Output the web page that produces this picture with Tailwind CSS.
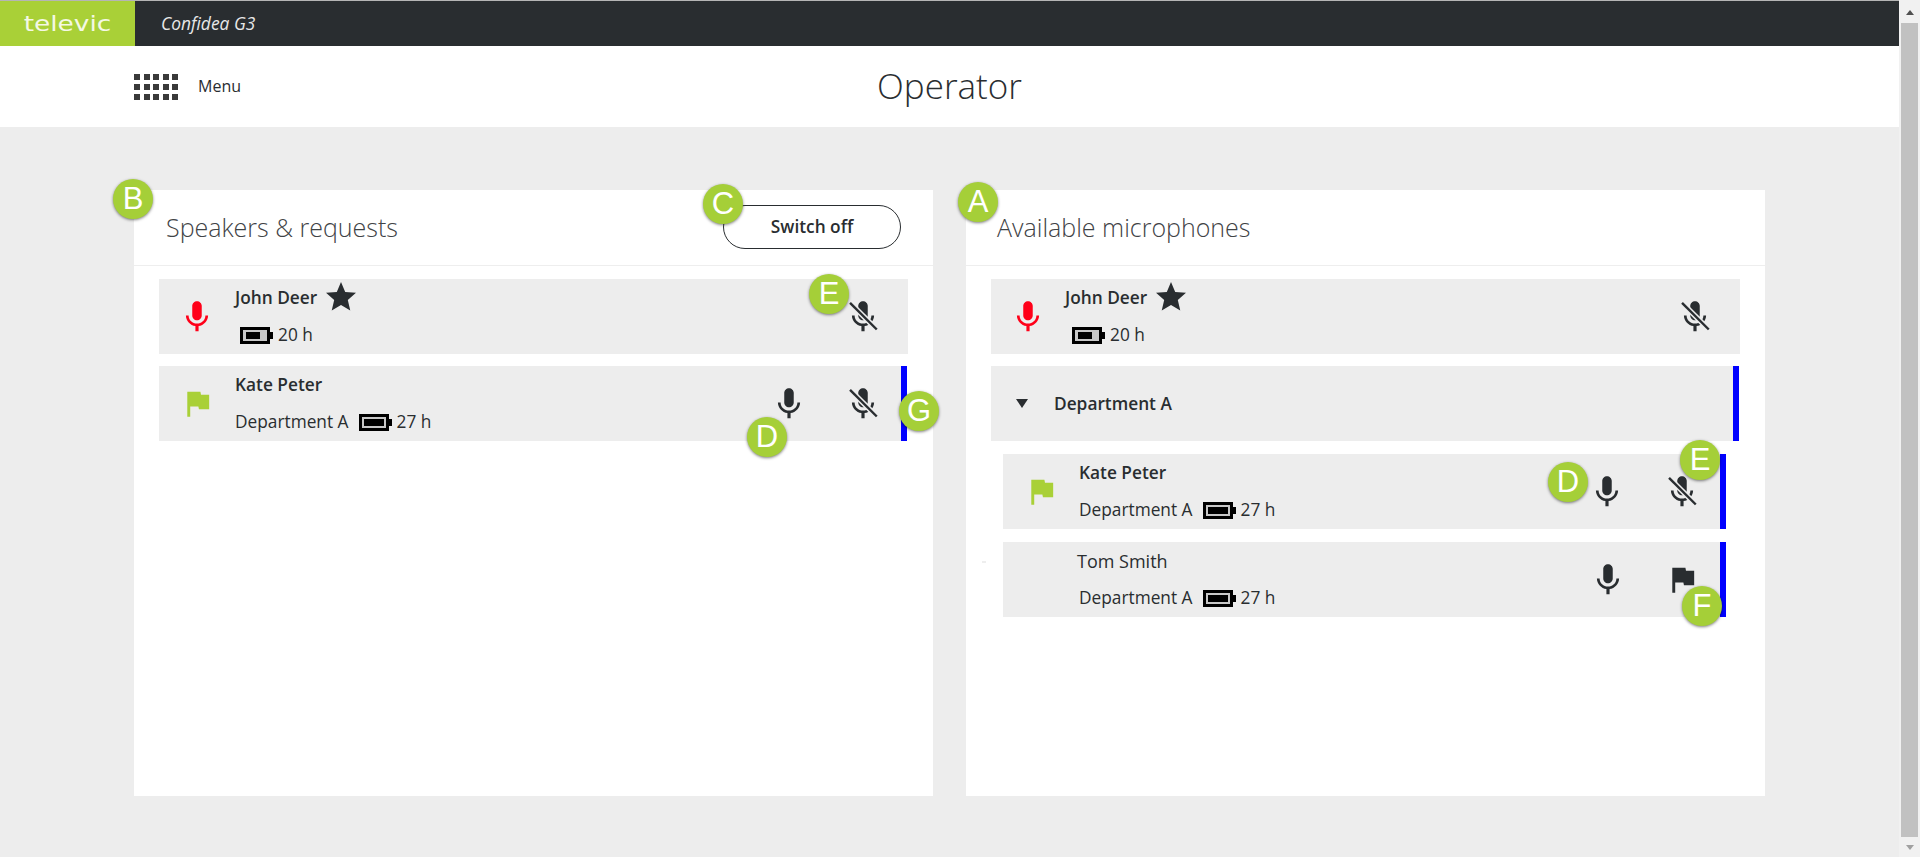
<!DOCTYPE html>
<html lang="en">
<head>
  <meta charset="UTF-8">
  <title>Confidea G3 - Operator</title>
  <meta name="viewport" content="width=device-width, initial-scale=1.0">
  <script src="https://cdn.jsdelivr.net/npm/@tailwindcss/browser@4"></script>
</head>
<body class="font-['Open_Sans',sans-serif] text-[#292d30] bg-[#ededed]">
  <svg class="hidden">
    <symbol id="mic" viewBox="0 0 24 24"><path fill="currentColor" d="M12 14c1.66 0 2.99-1.34 2.99-3L15 5c0-1.66-1.34-3-3-3S9 3.34 9 5v6c0 1.66 1.34 3 3 3zm5.3-3c0 3-2.54 5.1-5.3 5.1S6.7 14 6.7 11H5c0 3.41 2.72 6.23 6 6.72V21h2v-3.28c3.28-.48 6-3.3 6-6.72h-1.7z"/></symbol>
    <symbol id="mic-off" viewBox="0 0 24 24">
      <path fill="currentColor" d="M12 14c1.66 0 2.99-1.34 2.99-3L15 5c0-1.66-1.34-3-3-3S9 3.34 9 5v6c0 1.66 1.34 3 3 3zm5.3-3c0 3-2.54 5.1-5.3 5.1S6.7 14 6.7 11H5c0 3.41 2.72 6.23 6 6.72V21h2v-3.28c3.28-.48 6-3.3 6-6.72h-1.7z"/>
      <path stroke="#ededed" stroke-width="3.4" d="M3.8 3.1 20.7 19.9"/>
      <path stroke="currentColor" stroke-width="1.5" d="M3.8 3.1 20.7 19.9"/>
    </symbol>
    <symbol id="flag" viewBox="0 0 24 24"><path fill="currentColor" d="M14.4 6L14 4H5v17h2v-7h5.6l.4 2h7V6z"/></symbol>
    <symbol id="star" viewBox="0 0 24 24"><path fill="currentColor" d="M12 17.27L18.18 21l-1.64-7.03L22 9.24l-7.19-.61L12 2 9.19 8.63 2 9.24l5.46 4.73L5.82 21z"/></symbol>
    <symbol id="battery-low" viewBox="0 0 33 17">
      <path fill="#000" d="M0 0h30v5h3v7h-3v5H0z"/><path fill="#c8c8c8" d="M3 3h24v11H3z"/><path fill="#000" d="M6 5h14v7H6z"/>
    </symbol>
    <symbol id="battery-full" viewBox="0 0 33 17">
      <path fill="#000" d="M0 0h30v5h3v7h-3v5H0z"/><path fill="#c8c8c8" d="M3 3h24v11H3z"/><path fill="#000" d="M5 5h20v7H5z"/>
    </symbol>
  </svg>

  <div class="relative h-[857px] w-[1920px] overflow-hidden flex">
    <div class="w-[1899px] h-full flex flex-col">
      <!-- top bar -->
      <div class="h-px bg-[#b5b5b5]"></div>
      <div class="h-[45px] bg-[#292d30] flex items-center">
        <div class="w-[135px] h-full bg-[#a9d037] flex items-center justify-center">
          <span class="text-[#f4f8e4] font-['DejaVu_Sans',sans-serif] text-[22px] scale-x-120 leading-none">televic</span>
        </div>
        <div class="ml-[26px] italic text-[17.4px] text-[#e8e8e8]">Confidea G3</div>
      </div>
      <!-- header -->
      <div class="relative h-[81px] bg-white flex items-center justify-center">
        <div class="absolute left-[134px] top-[28px] flex items-center gap-[20px]">
          <div class="w-[44px] grid grid-cols-5 gap-x-[3.5px] gap-y-[4px]">
            <i class="h-[6px] bg-[#3a3a3a]"></i><i class="h-[6px] bg-[#3a3a3a]"></i><i class="h-[6px] bg-[#3a3a3a]"></i><i class="h-[6px] bg-[#3a3a3a]"></i><i class="h-[6px] bg-[#3a3a3a]"></i>
            <i class="h-[6px] bg-[#3a3a3a]"></i><i class="h-[6px] bg-[#3a3a3a]"></i><i class="h-[6px] bg-[#3a3a3a]"></i><i class="h-[6px] bg-[#3a3a3a]"></i><i class="h-[6px] bg-[#3a3a3a]"></i>
            <i class="h-[6px] bg-[#3a3a3a]"></i><i class="h-[6px] bg-[#3a3a3a]"></i><i class="h-[6px] bg-[#3a3a3a]"></i><i class="h-[6px] bg-[#3a3a3a]"></i><i class="h-[6px] bg-[#3a3a3a]"></i>
          </div>
          <span class="text-[16px] mt-[-2px]">Menu</span>
        </div>
        <h1 class="text-[35px] font-light">Operator</h1>
      </div>

      <!-- panels -->
      <div class="flex-1 pl-[134px] pt-[63px] flex gap-[33px]">
        <section class="w-[799px] h-[606px] bg-white">
          <div class="h-[76px] border-b border-[#eeeeee] pl-[32px] pr-[32px] flex items-center justify-between">
            <h2 class="text-[25px] font-light text-[#3f4346]">Speakers &amp; requests</h2>
            <button class="w-[178px] h-[44px] mt-[-1px] rounded-[22px] border border-[#292d30] text-[17.3px] font-semibold">Switch off</button>
          </div>
          <div class="pl-[25px] pt-[13px]">
            <div class="w-[749px] h-[75px] bg-[#ededed] flex items-center">
              <div class="w-[76px] flex justify-center text-[#ff0019]"><svg class="w-[38px] h-[38px]"><use href="#mic"/></svg></div>
              <div class="flex-1 self-stretch text-[17.3px]">
                <div class="flex items-center h-[38px] font-semibold">John Deer<svg class="w-[36px] h-[36px] ml-[6px] mt-[-2px]"><use href="#star"/></svg></div>
                <div class="flex items-center h-[36px] ml-[5px]"><svg class="w-[33px] h-[17px] mr-[5px]"><use href="#battery-low"/></svg>20 h</div>
              </div>
              <div class="pr-[26px] flex"><svg class="w-[38px] h-[38px]"><use href="#mic-off"/></svg></div>
            </div>
            <div class="mt-[12px] w-[748px] h-[75px] bg-[#ededed] border-r-[6px] border-[#0000ff] flex items-center">
              <div class="w-[76px] flex justify-center text-[#a9d037]"><svg class="w-[35px] h-[35px]"><use href="#flag"/></svg></div>
              <div class="flex-1 self-stretch text-[17.3px]">
                <div class="flex items-center h-[37px] font-semibold">Kate Peter</div>
                <div class="flex items-center h-[38px]">Department A<svg class="w-[33px] h-[17px] ml-[10px] mr-[5px]"><use href="#battery-full"/></svg>27 h</div>
              </div>
              <div class="pr-[19px] flex gap-[36px]"><svg class="w-[38px] h-[38px]"><use href="#mic"/></svg><svg class="w-[38px] h-[38px]"><use href="#mic-off"/></svg></div>
            </div>
          </div>
        </section>

        <section class="w-[799px] h-[606px] bg-white">
          <div class="h-[76px] border-b border-[#eeeeee] pl-[31px] flex items-center">
            <h2 class="text-[25px] font-light text-[#3f4346]">Available microphones</h2>
          </div>
          <div class="pl-[25px] pt-[13px]">
            <div class="w-[749px] h-[75px] bg-[#ededed] flex items-center">
              <div class="w-[74px] flex justify-center text-[#ff0019]"><svg class="w-[38px] h-[38px]"><use href="#mic"/></svg></div>
              <div class="flex-1 self-stretch text-[17.3px]">
                <div class="flex items-center h-[38px] font-semibold">John Deer<svg class="w-[36px] h-[36px] ml-[6px] mt-[-2px]"><use href="#star"/></svg></div>
                <div class="flex items-center h-[36px] ml-[7px]"><svg class="w-[33px] h-[17px] mr-[5px]"><use href="#battery-low"/></svg>20 h</div>
              </div>
              <div class="pr-[26px] flex"><svg class="w-[38px] h-[38px]"><use href="#mic-off"/></svg></div>
            </div>
            <div class="mt-[12px] w-[748px] h-[75px] bg-[#ededed] border-r-[6px] border-[#0000ff] flex items-center">
              <div class="ml-[25px] w-0 h-0 border-x-[6.5px] border-x-transparent border-t-[9px] border-t-[#292d30]"></div>
              <div class="ml-[26px] text-[17.3px] font-semibold">Department A</div>
            </div>
            <div class="mt-[13px] ml-[12px] w-[723px] h-[75px] bg-[#ededed] border-r-[6px] border-[#0000ff] flex items-center">
              <div class="w-[76px] flex justify-center text-[#a9d037]"><svg class="w-[35px] h-[35px]"><use href="#flag"/></svg></div>
              <div class="flex-1 self-stretch text-[17.3px]">
                <div class="flex items-center h-[37px] font-semibold">Kate Peter</div>
                <div class="flex items-center h-[38px]">Department A<svg class="w-[33px] h-[17px] ml-[10px] mr-[5px]"><use href="#battery-full"/></svg>27 h</div>
              </div>
              <div class="pr-[19px] flex gap-[37px]"><svg class="w-[38px] h-[38px]"><use href="#mic"/></svg><svg class="w-[38px] h-[38px]"><use href="#mic-off"/></svg></div>
            </div>
            <div class="mt-[13px] ml-[12px] w-[723px] h-[75px] bg-[#ededed] border-r-[6px] border-[#0000ff] flex items-center">
              <div class="w-[76px]"></div>
              <div class="flex-1 self-stretch text-[17.3px]">
                <div class="flex items-center h-[38px] ml-[-2px] text-[18px]">Tom Smith</div>
                <div class="flex items-center h-[36px]">Department A<svg class="w-[33px] h-[17px] ml-[10px] mr-[5px]"><use href="#battery-full"/></svg>27 h</div>
              </div>
              <div class="pr-[20px] flex items-center gap-[38px]"><svg class="w-[38px] h-[38px]"><use href="#mic"/></svg><svg class="w-[35px] h-[35px]"><use href="#flag"/></svg></div>
            </div>
          </div>
        </section>
      </div>
    </div>

    <!-- scrollbar -->
    <div class="w-[21px] h-full bg-[#f1f1f1] flex flex-col items-center">
      <div class="h-[23px] w-full flex items-center justify-center pt-[2px]"><div class="w-0 h-0 border-x-[4.5px] border-x-transparent border-b-[5px] border-b-[#505050]"></div></div>
      <div class="w-[17px] h-[814px] bg-[#c1c1c1]"></div>
      <div class="flex-1 w-full flex items-center justify-center"><div class="w-0 h-0 border-x-[4.5px] border-x-transparent border-t-[5px] border-t-[#a0a0a0]"></div></div>
    </div>

    <!-- stray mark left of the Tom Smith row -->
    <div class="absolute left-[982px] top-[561px] w-[4px] h-[2px] bg-[#eeeeee]"></div>

    <!-- callout badges -->
    <div class="absolute left-[113px] top-[179px] w-[40px] h-[40px] rounded-full bg-[#a5cf38] shadow-[0_1px_3px_rgba(0,0,0,0.5)] flex items-center justify-center text-white text-[31px] font-['Liberation_Sans',sans-serif]">B</div>
    <div class="absolute left-[703px] top-[184px] w-[40px] h-[40px] rounded-full bg-[#a5cf38] shadow-[0_1px_3px_rgba(0,0,0,0.5)] flex items-center justify-center text-white text-[31px] font-['Liberation_Sans',sans-serif]">C</div>
    <div class="absolute left-[958px] top-[182px] w-[40px] h-[40px] rounded-full bg-[#a5cf38] shadow-[0_1px_3px_rgba(0,0,0,0.5)] flex items-center justify-center text-white text-[31px] font-['Liberation_Sans',sans-serif]">A</div>
    <div class="absolute left-[809px] top-[274px] w-[40px] h-[40px] rounded-full bg-[#a5cf38] shadow-[0_1px_3px_rgba(0,0,0,0.5)] flex items-center justify-center text-white text-[31px] font-['Liberation_Sans',sans-serif]">E</div>
    <div class="absolute left-[747px] top-[417px] w-[40px] h-[40px] rounded-full bg-[#a5cf38] shadow-[0_1px_3px_rgba(0,0,0,0.5)] flex items-center justify-center text-white text-[31px] font-['Liberation_Sans',sans-serif]">D</div>
    <div class="absolute left-[899px] top-[391px] w-[40px] h-[40px] rounded-full bg-[#a5cf38] shadow-[0_1px_3px_rgba(0,0,0,0.5)] flex items-center justify-center text-white text-[31px] font-['Liberation_Sans',sans-serif]">G</div>
    <div class="absolute left-[1548px] top-[462px] w-[40px] h-[40px] rounded-full bg-[#a5cf38] shadow-[0_1px_3px_rgba(0,0,0,0.5)] flex items-center justify-center text-white text-[31px] font-['Liberation_Sans',sans-serif]">D</div>
    <div class="absolute left-[1680px] top-[440px] w-[40px] h-[40px] rounded-full bg-[#a5cf38] shadow-[0_1px_3px_rgba(0,0,0,0.5)] flex items-center justify-center text-white text-[31px] font-['Liberation_Sans',sans-serif]">E</div>
    <div class="absolute left-[1682px] top-[586px] w-[40px] h-[40px] rounded-full bg-[#a5cf38] shadow-[0_1px_3px_rgba(0,0,0,0.5)] flex items-center justify-center text-white text-[31px] font-['Liberation_Sans',sans-serif]">F</div>
  </div>
</body>
</html>
